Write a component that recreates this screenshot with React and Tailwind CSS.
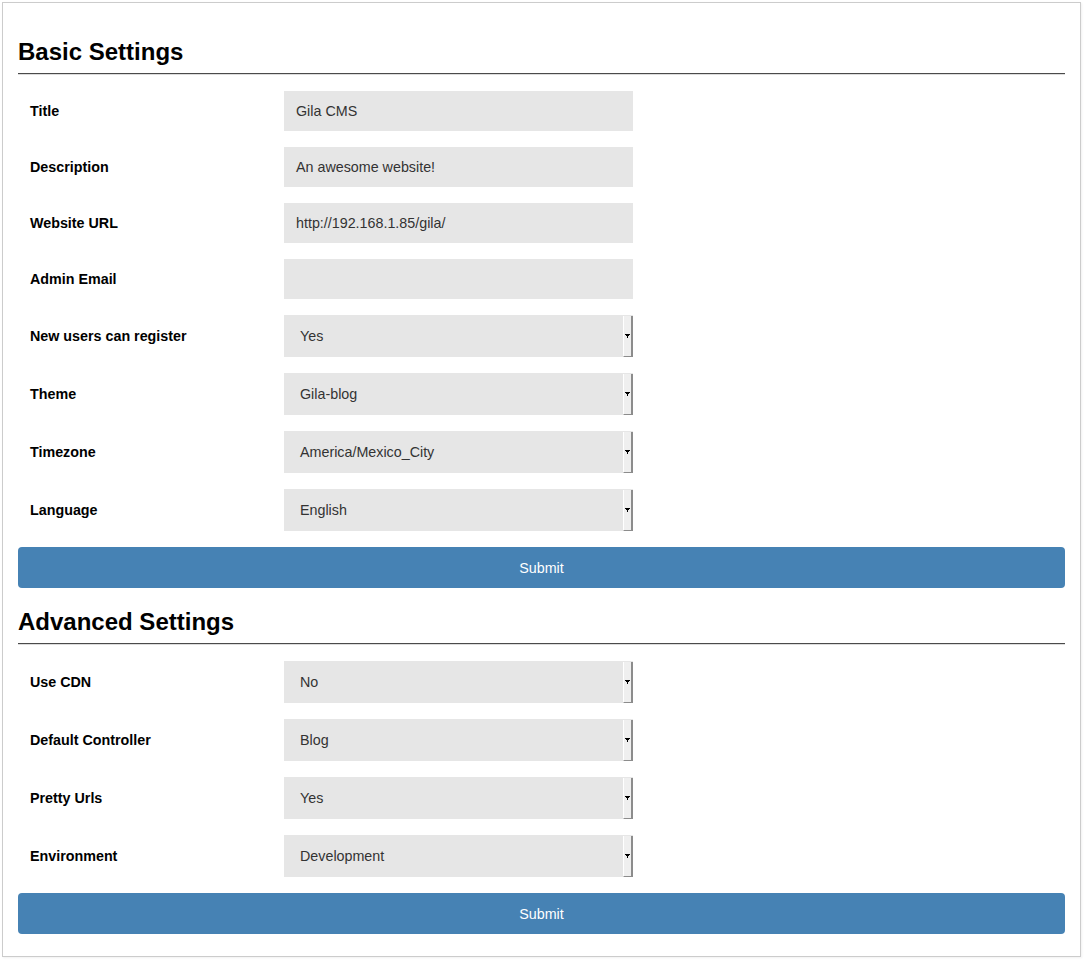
import React from "react";

const basicFields = [
    { label: "Title", type: "text", value: "Gila CMS" },
    { label: "Description", type: "text", value: "An awesome website!" },
    { label: "Website URL", type: "text", value: "http://192.168.1.85/gila/" },
    { label: "Admin Email", type: "text", value: "" },
    { label: "New users can register", type: "select", value: "Yes" },
    { label: "Theme", type: "select", value: "Gila-blog" },
    { label: "Timezone", type: "select", value: "America/Mexico_City" },
    { label: "Language", type: "select", value: "English" },
];

const advancedFields = [
    { label: "Use CDN", type: "select", value: "No" },
    { label: "Default Controller", type: "select", value: "Blog" },
    { label: "Pretty Urls", type: "select", value: "Yes" },
    { label: "Environment", type: "select", value: "Development" },
];

function Heading({ children, first }) {
    return (
        <div className={first ? "" : "mt-[20px]"}>
            <h2 className="text-[24px] leading-[28px] font-bold text-black pb-[7px]">
                {children}
            </h2>
            <div className="h-px bg-[#4a4a4a]" />
            <div className="h-px bg-[#dcdcdc]" />
        </div>
    );
}

function Arrow() {
    return (
        <div className="absolute right-0 top-[1px] bottom-0 w-[10px] flex items-center justify-center border-l border-l-white border-r-2 border-r-[#8c8c8c] border-b border-b-[#8c8c8c] bg-[#efefef]">
            <svg width="5" height="4" viewBox="0 0 5 4" className="-ml-[1px]">
                <path d="M0 0h5v1H0z M1 1h3v1H1z M2 2h1v2H2z" fill="#000" />
            </svg>
        </div>
    );
}

function Row({ field }) {
    return (
        <div className="flex items-center">
            <label className="w-[266px] pl-[12px] pt-[2px] text-[14.3px] font-bold text-black">
                {field.label}
            </label>

            {field.type === "text" ? (
                <div className="w-[349px] h-[40px] bg-[#e6e6e6] flex items-center px-[12px] pt-[2px] text-[14.3px] text-[#333]">
                    {field.value}
                </div>
            ) : (
                <div className="relative w-[349px] h-[42px] bg-[#e6e6e6] flex items-center pl-[16px] pt-[2px] text-[14.3px] text-[#333]">
                    {field.value}
                    <Arrow />
                </div>
            )}
        </div>
    );
}

function SubmitButton() {
    return (
        <button className="w-full h-[41px] mt-[16px] pt-[2px] bg-[#4682b4] rounded-[4px] text-white text-[14.3px]">
            Submit
        </button>
    );
}

export default function App() {
    return (
        <div className="min-h-screen bg-white font-['Liberation_Sans',Arial,sans-serif]">
            <div className="ml-[2px] mt-[2px] w-[1079px] border border-[#cccccc] px-[15px] pt-[35px] pb-[22px] shadow-[1px_1px_2px_rgba(0,0,0,0.06)]">

                {/* Basic */}

                <Heading first>Basic Settings</Heading>

                <div className="flex flex-col gap-[16px] mt-[16px]">
                    {basicFields.map((f) => (
                        <Row key={f.label} field={f} />
                    ))}
                </div>

                <SubmitButton />

                {/* Advanced */}

                <Heading>Advanced Settings</Heading>

                <div className="flex flex-col gap-[16px] mt-[16px]">
                    {advancedFields.map((f) => (
                        <Row key={f.label} field={f} />
                    ))}
                </div>

                <SubmitButton />

            </div>
        </div>
    );
}
